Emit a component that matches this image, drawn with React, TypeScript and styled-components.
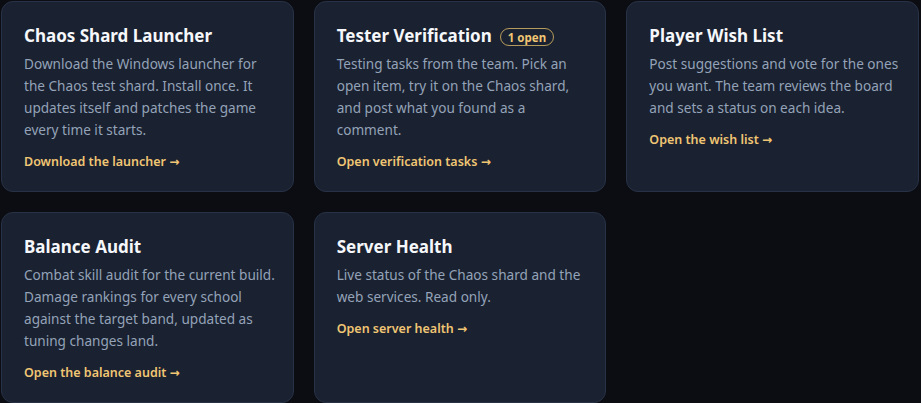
import React from 'react';
import styled, { createGlobalStyle } from 'styled-components';

type Tool = {
  title: string;
  badge?: string;
  text: string;
  link: string;
};

const tools: Tool[] = [
  {
    title: 'Chaos Shard Launcher',
    text: 'Download the Windows launcher for the Chaos test shard. Install once. It updates itself and patches the game every time it starts.',
    link: 'Download the launcher',
  },
  {
    title: 'Tester Verification',
    badge: '1 open',
    text: 'Testing tasks from the team. Pick an open item, try it on the Chaos shard, and post what you found as a comment.',
    link: 'Open verification tasks',
  },
  {
    title: 'Player Wish List',
    text: 'Post suggestions and vote for the ones you want. The team reviews the board and sets a status on each idea.',
    link: 'Open the wish list',
  },
  {
    title: 'Balance Audit',
    text: 'Combat skill audit for the current build. Damage rankings for every school against the target band, updated as tuning changes land.',
    link: 'Open the balance audit',
  },
  {
    title: 'Server Health',
    text: 'Live status of the Chaos shard and the web services. Read only.',
    link: 'Open server health',
  },
];

const GlobalStyle = createGlobalStyle`
  html, body {
    margin: 0;
    padding: 0;
    background: #0b0d12;
    overflow: hidden;
  }
  body {
    font-family: "Noto Sans", "Open Sans", sans-serif;
    -webkit-font-smoothing: antialiased;
  }
`;

const App = () => {
  return (
    <>
      <GlobalStyle />
      <Grid>
        {tools.map((tool) => (
          <Card key={tool.title}>
            <TitleRow>
              <Title>{tool.title}</Title>
              {tool.badge && <Badge>{tool.badge}</Badge>}
            </TitleRow>
            <Description>{tool.text}</Description>
            <CardLink href="#">
              {tool.link} <Arrow>→</Arrow>
            </CardLink>
          </Card>
        ))}
      </Grid>
    </>
  );
};

export default App;

const Grid = styled.main`
  display: grid;
  grid-template-columns: repeat(3, 1fr);
  grid-auto-rows: 191px;
  column-gap: 20px;
  row-gap: 20px;
  width: 918px;
  padding: 1px 0 0 1px;
  box-sizing: content-box;
`;

const Card = styled.section`
  display: flex;
  flex-direction: column;
  align-items: flex-start;
  box-sizing: border-box;
  padding: 22px 14px 20px 22px;
  background: #1a2130;
  border: 1px solid #283246;
  border-radius: 12px;
`;

const TitleRow = styled.div`
  display: flex;
  align-items: center;
  gap: 8px;
  margin-bottom: 5px;
`;

const Title = styled.h2`
  margin: 0;
  font-size: 17px;
  line-height: 24px;
  font-weight: 700;
  color: #f5f7fa;
`;

const Badge = styled.span`
  display: inline-flex;
  align-items: center;
  height: 18px;
  padding: 0 7px;
  box-sizing: border-box;
  border: 1px solid rgba(233, 196, 106, 0.75);
  border-radius: 999px;
  font-size: 11.5px;
  font-weight: 700;
  color: #f0c674;
  margin-top: 2px;
`;

const Description = styled.p`
  margin: 0 0 11px;
  font-size: 13.6px;
  line-height: 22px;
  color: #94a3b8;
`;

const CardLink = styled.a`
  font-size: 12.5px;
  line-height: 20px;
  font-weight: 600;
  color: #f0c674;
  text-decoration: none;
`;

const Arrow = styled.span`
  font-family: "DejaVu Sans", sans-serif;
  font-size: 12px;
`;
